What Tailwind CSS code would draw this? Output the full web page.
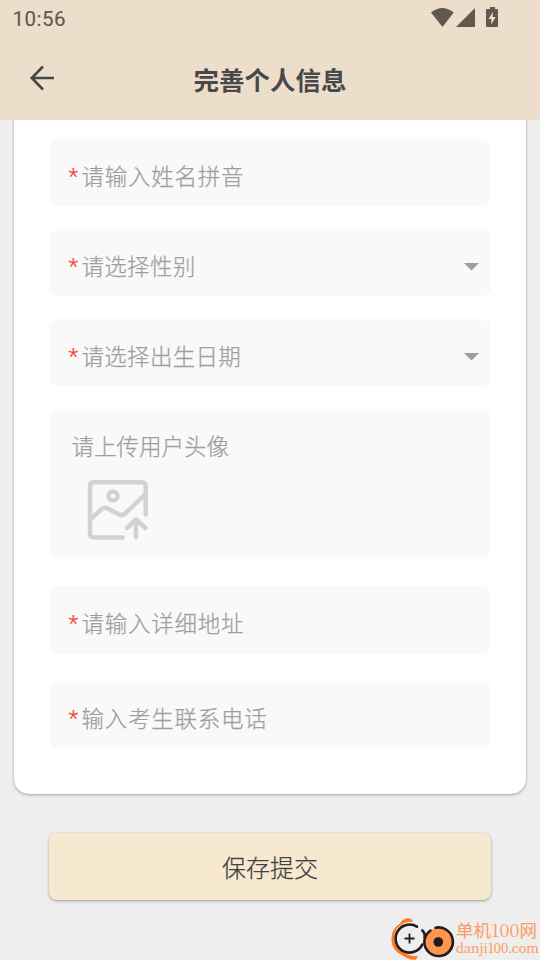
<!DOCTYPE html>
<html lang="zh-CN">
<head>
<meta charset="utf-8">
<meta name="viewport" content="width=device-width, initial-scale=1">
<title>完善个人信息</title>
<script src="https://cdn.jsdelivr.net/npm/@tailwindcss/browser@4"></script>
</head>
<body class="h-[960px] w-[540px] overflow-hidden bg-[#eeeeee] font-['Noto_Sans_CJK_SC',sans-serif] text-[#9e9e9e]">
<div class="relative flex h-full flex-col">
  <header class="relative z-10 h-[120px] shrink-0 bg-[#ecdeca]">
    <div class="flex h-[36px] items-center justify-between pl-[12.500px] pr-[41px] text-[#615850]">
      <span class="pt-[2px] font-['Roboto',sans-serif] text-[20.500px] font-[450] leading-none tracking-[0.500px] [-webkit-text-stroke:0.150px]">10:56</span>
      <svg class="h-[36px] w-[69px]" viewBox="430 0 69 36" fill="currentColor">
        <path d="M431 12.5Q442.300 3.500 453.700 12.500L442.500 27Z"/>
        <path d="M475 8V27H456Z"/>
        <path fill-rule="evenodd" d="M490 7h5v2h2q1 0 1 1v16q0 1-1 1h-10q-1 0-1-1V10q0-1 1-1h3ZM492.700 12L488.600 19h2.700v5.500L495.600 17h-2.900Z"/>
      </svg>
    </div>
    <div class="grid h-[84px] grid-cols-[84px_1fr_84px] items-center">
      <svg class="ml-[28px] h-[28px] w-[28px]" viewBox="28 64 28 28" fill="none" stroke="#424749" stroke-width="2.600"><path d="M54 78H32M43 66.500L31.800 78L43 89.500"/></svg>
      <h1 class="pt-[2px] text-center text-[25.500px] font-bold leading-none text-[#484848]">完善个人信息</h1>
    </div>
  </header>
  <main class="mx-[14px] -mt-[20px] h-[694px] shrink-0 rounded-[15px] bg-white px-[35px] pt-[39px] text-[22.500px] font-light leading-[34px] shadow-[0_1px_3px_rgba(0,0,0,0.35)] [-webkit-text-stroke:0.250px]">
    <div class="flex h-[67px] items-center rounded-[9px] bg-[#f9f9f9] pl-[19.500px] pt-[4px]"><span class="w-[13px] pt-[2px] font-['Roboto',sans-serif] text-[22.500px] text-[#f44336]">*</span><span class="tracking-[0.750px]">请输入姓名拼音</span></div>
    <div class="mt-[23px] flex h-[67px] items-center rounded-[9px] bg-[#f9f9f9] pl-[19.500px] pr-[12px] pt-[4px]"><span class="w-[13px] pt-[2px] font-['Roboto',sans-serif] text-[22.500px] text-[#f44336]">*</span><span class="tracking-[0.300px]">请选择性别</span><svg class="mt-[4px] ml-auto h-[8px] w-[15px]" viewBox="0 0 15 8" fill="#9e9e9e"><path d="M0 0H15L7.500 7.500Z"/></svg></div>
    <div class="mt-[23px] flex h-[67px] items-center rounded-[9px] bg-[#f9f9f9] pl-[19.500px] pr-[12px] pt-[4px]"><span class="w-[13px] pt-[2px] font-['Roboto',sans-serif] text-[22.500px] text-[#f44336]">*</span><span class="tracking-[0.300px]">请选择出生日期</span><svg class="mt-[4px] ml-auto h-[8px] w-[15px]" viewBox="0 0 15 8" fill="#9e9e9e"><path d="M0 0H15L7.500 7.500Z"/></svg></div>
    <div class="mt-[23px] h-[150px] rounded-[9px] bg-[#f9f9f9] pl-[22.500px] pt-[19px]">
      <div>请上传用户头像</div>
      <svg class="ml-[14.500px] mt-[16px] h-[64px] w-[64px]" viewBox="86 478 64 64" fill="none" stroke="#d2d2d2" stroke-width="4.500" stroke-linecap="round" stroke-linejoin="round">
        <path d="M122.500 537.500H94Q90 537.500 90 533.500V486.500Q90 482.300 94 482.300H141.500Q145.700 482.300 145.700 486.500V514.500M91 519L101.500 509Q104 507 107 508.200L119.500 514.500Q122.500 516 125 513.700L145 494.500"/>
        <circle cx="113" cy="496" r="4.600"/>
        <path d="M136 537.500V520.500M127 528L136 519.500L145.500 528"/>
      </svg>
    </div>
    <div class="mt-[27px] flex h-[68px] items-center rounded-[9px] bg-[#f9f9f9] pl-[19.500px] pt-[4px]"><span class="w-[13px] pt-[2px] font-['Roboto',sans-serif] text-[22.500px] text-[#f44336]">*</span><span class="tracking-[0.750px]">请输入详细地址</span></div>
    <div class="mt-[27px] flex h-[67px] items-center rounded-[9px] bg-[#f9f9f9] pl-[19.500px] pt-[4px]"><span class="w-[13px] pt-[2px] font-['Roboto',sans-serif] text-[22.500px] text-[#f44336]">*</span><span class="tracking-[0.750px]">输入考生联系电话</span></div>
  </main>
  <button class="mx-[49px] mt-[39px] h-[67px] shrink-0 rounded-[8px] bg-[#f7e9cf] text-[24px] font-light leading-none text-[#424242] shadow-[0_1px_3px_rgba(0,0,0,0.35)] [-webkit-text-stroke:0.250px]">保存提交</button>
  <div class="absolute left-[390px] top-[916px] flex h-[44px] w-[150px]">
    <svg class="h-[44px] w-[66px] shrink-0" viewBox="390 916 66 44" fill="none">
      <path d="M413 921.500Q411 917.500 406 918.500Q402 919.500 400.500 923Q391 929 391.500 940Q392 951 402 955Q410 961 416 959.500L418 956Q409 957 402 951Q394 946 394 938Q394 928 404 923Q408 921.500 413 921.500Z" fill="#ff7a1c"/>
      <path d="M417 926.700A14 14 0 1 0 422.300 944.500" stroke="#241b1c" stroke-width="2.600" stroke-linecap="round"/>
      <path d="M409.500 933.500v10M404.500 938.500h10" stroke="#241b1c" stroke-width="1.800"/>
      <circle cx="438.300" cy="942" r="14" fill="#ff9650"/>
      <path d="M422.300 930.500Q425.500 933 424.500 938M430.500 930.500Q424.500 935 424.300 942A14.300 14.300 0 1 0 435.500 927.800" stroke="#241b1c" stroke-width="2.600" stroke-linecap="round"/>
      <circle cx="438.300" cy="942" r="4.800" fill="#241b1c"/>
    </svg>
    <div class="flex flex-col gap-[1px] pt-[4px] whitespace-nowrap font-['Noto_Serif_CJK_SC','Noto_Sans_CJK_SC',serif] text-[#ff9a5e]">
      <span class="font-['Noto_Sans_CJK_SC',sans-serif] text-[17.500px] leading-[18px]">单机<span class="font-['Noto_Serif_CJK_SC',serif] text-[18px] leading-none">100</span>网</span>
      <span class="text-[13px] leading-[16px] tracking-[-0.100px] [-webkit-text-stroke:0.200px]">danji100.com</span>
    </div>
  </div>
</div>
</body>
</html>
